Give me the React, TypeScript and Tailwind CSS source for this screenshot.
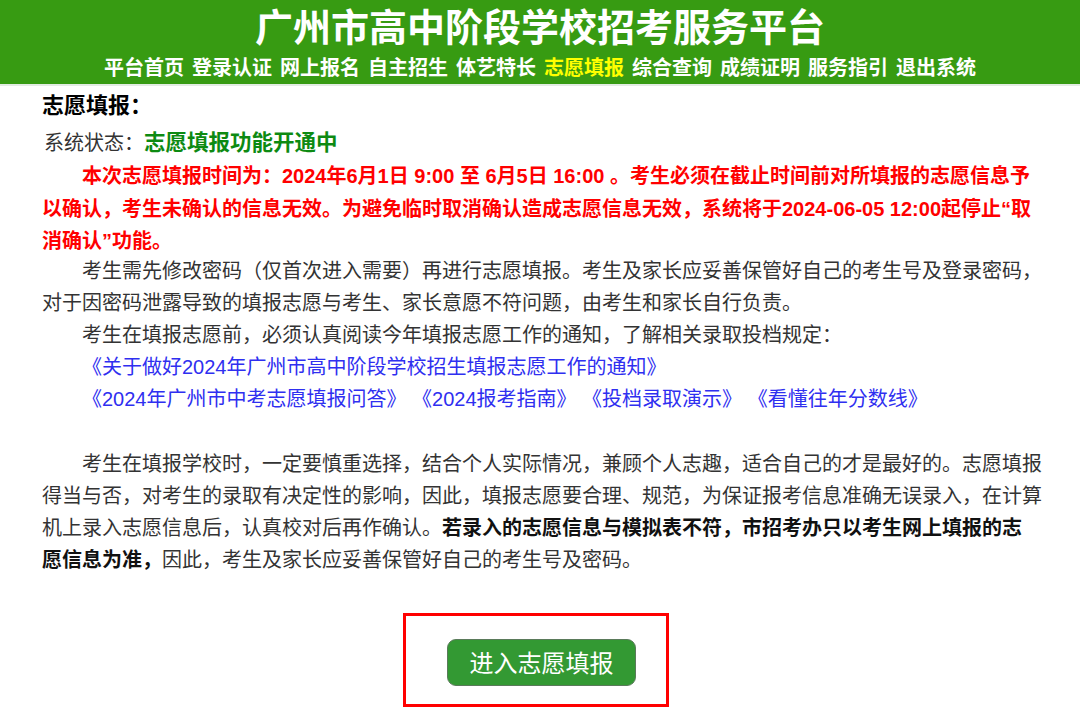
import React from "react";

const cjkSans = { fontFamily: '"Liberation Sans", "Noto Sans CJK SC", sans-serif' };
const cjkSerif = { fontFamily: '"Liberation Serif", "Noto Sans CJK SC", serif' };

const navItems = [
  "平台首页",
  "登录认证",
  "网上报名",
  "自主招生",
  "体艺特长",
  "志愿填报",
  "综合查询",
  "成绩证明",
  "服务指引",
  "退出系统",
];

export default function App() {
  return (
    <div className="w-[1080px] h-[724px] bg-white overflow-hidden" style={cjkSans}>
      <header className="h-[84px] bg-[#379b12] flex flex-col items-center">
        <h1 className="text-[38px] leading-[56px] font-bold text-white">
          广州市高中阶段学校招考服务平台
        </h1>
        <nav className="flex gap-[8px] text-[20px] leading-[24px] font-bold text-white">
          {navItems.map((n) => (
            <span key={n} className={n === "志愿填报" ? "text-[#ffff00]" : ""}>
              {n}
            </span>
          ))}
        </nav>
      </header>
      <div className="h-[2px] bg-[#e3ece3]" />

      <main className="pl-[42px] pt-[4px]">
        <div className="text-[22px] leading-[32px] font-bold text-black">志愿填报：</div>
        <div className="mt-[5px] text-[20px] leading-[32px] pl-[2px]">
          <span className="text-[#333333]" style={cjkSerif}>系统状态：</span>
          <span className="font-bold text-[#0d8a12] text-[21.5px]">志愿填报功能开通中</span>
        </div>

        <div className="mt-[1px] text-[20px] leading-[32.5px] font-bold text-[#ff0000] whitespace-nowrap">
          <span className="pl-[40px]">本次志愿填报时间为：2024年6月1日 9:00 至 6月5日 16:00 。考生必须在截止时间前对所填报的志愿信息予</span>
          <br />
          以确认，考生未确认的信息无效。为避免临时取消确认造成志愿信息无效，系统将于2024-06-05 12:00起停止“取
          <br />
          消确认”功能。
        </div>

        <div className="-mt-[3px] text-[20px] leading-[32px] text-[#333333] whitespace-nowrap" style={cjkSerif}>
          <div>
            <span className="pl-[40px]">考生需先修改密码（仅首次进入需要）再进行志愿填报。考生及家长应妥善保管好自己的考生号及登录密码，</span>
            <br />
            对于因密码泄露导致的填报志愿与考生、家长意愿不符问题，由考生和家长自行负责。
          </div>
          <div className="pl-[40px]">考生在填报志愿前，必须认真阅读今年填报志愿工作的通知，了解相关录取投档规定：</div>
          <div className="pl-[40px] text-[#2f2ff0]" style={cjkSans}>
            《关于做好2024年广州市高中阶段学校招生填报志愿工作的通知》
          </div>
          <div className="pl-[40px] text-[#2f2ff0]" style={cjkSans}>
            《2024年广州市中考志愿填报问答》 《2024报考指南》 《投档录取演示》 《看懂往年分数线》
          </div>
          <div className="h-[33px]" />
          <div>
            <span className="pl-[40px]">考生在填报学校时，一定要慎重选择，结合个人实际情况，兼顾个人志趣，适合自己的才是最好的。志愿填报</span>
            <br />
            得当与否，对考生的录取有决定性的影响，因此，填报志愿要合理、规范，为保证报考信息准确无误录入，在计算
            <br />
            机上录入志愿信息后，认真校对后再作确认。
            <b className="text-[#111111]">若录入的志愿信息与模拟表不符，市招考办只以考生网上填报的志</b>
            <br />
            <b className="text-[#111111]">愿信息为准，</b>因此，考生及家长应妥善保管好自己的考生号及密码。
          </div>
        </div>
      </main>

      <div className="mt-[37px] ml-[403px] w-[266px] h-[94px] border-[3px] border-[#ff0000] pl-[41px] pt-[23px]">
        <button
          className="w-[189px] h-[47px] rounded-[9px] bg-[#339933] border border-[#5a7a5a] text-white text-[24px] leading-[44px] text-center"
          style={{ fontFamily: '"Noto Sans CJK SC", sans-serif' }}
        >
          进入志愿填报
        </button>
      </div>
    </div>
  );
}
